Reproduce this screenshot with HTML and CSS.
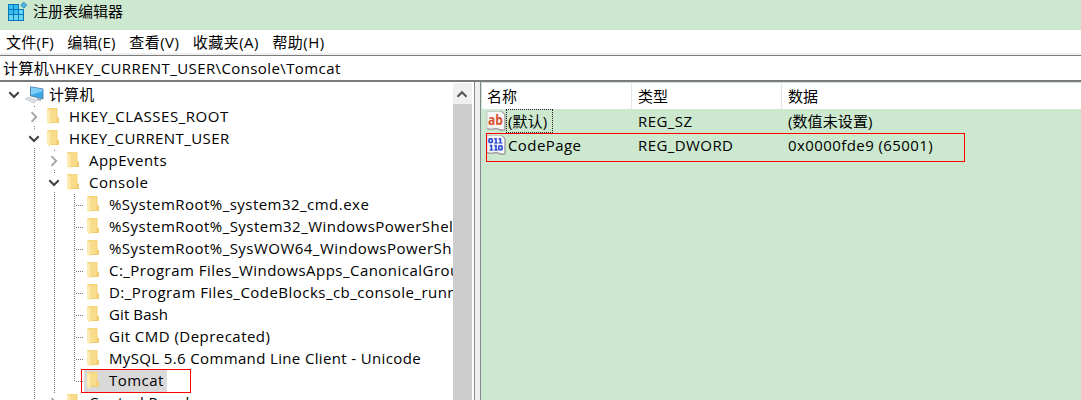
FILE: index.html
```html
<!DOCTYPE html>
<html lang="zh-CN">
<head>
<meta charset="utf-8">
<title>注册表编辑器</title>
<link rel="stylesheet" href="styles.css">
</head>
<body>
<svg class="defs" width="0" height="0">
  <symbol id="folder" viewBox="0 0 14 18">
    <path fill="#f5d67f" d="M1 0h10.500v9.500H13V15H4z"/>
    <path fill="#f9dc89" d="M5 1h5v13H5z"/>
    <path fill="#edc766" d="M11 10h2v5H5v-1h6z" opacity=".6"/>
    <path fill="#ffeab0" d="M1 .5l3.500 2V17L1 14.6z"/>
  </symbol>
  <symbol id="down" viewBox="0 0 12 8"><path d="M1.3 1.3L6 6l4.7-4.7" fill="none" stroke="#404040" stroke-width="2"/></symbol>
  <symbol id="right" viewBox="0 0 8 12"><path d="M1.5 1.2L6.2 6l-4.7 4.8" fill="none" stroke="#a6a6a6" stroke-width="1.9"/></symbol>
  <symbol id="sheet" viewBox="0 0 20 21">
    <path d="M1 .5H15.500l3.500 3v15.200c-2 .8-3 1-5 .1-2.600-1.200-3.500-1.500-6-.6-2 .7-5 .3-7-.8z" fill="#f7f7f7" stroke="#c9c9c9"/>
    <path d="M15.500 .5l3.500 3V18.800" fill="none" stroke="#8c8c8c"/>
    <path d="M1 17.300c2 1 4.500 1.300 6.500 .6 2.500-.9 3.500-.4 6 .8 2 .9 3.500 .7 5.500-.1" fill="none" stroke="#9c9c9c" stroke-width="1.400"/>
  </symbol>
</svg>
<main class="window">
  <header class="titlebar">
    <svg class="app-icon" viewBox="0 0 20 20" width="20" height="20">
      <path fill="#0878b9" d="M0 2h11v5h5v12H0z"/>
      <path fill="#35bdf0" d="M1 3h4v4H1zM6 3h4v4H6zM1 8h4v4H1zM6 8h4v4H6z"/>
      <path fill="#67d5fa" d="M11 8h4v4h-4zM1 13h4v5H1zM6 13h4v5H6zM11 13h4v5h-4z"/>
      <path fill="#4eb7e5" stroke="#1782bd" stroke-width=".8" d="M15.800.2l3 3-3 3-3-3z"/>
    </svg>
    <span class="title">注册表编辑器</span>
  </header>
  <nav class="menu">
    <span>文件(F)</span><span>编辑(E)</span><span class="m-view">查看(V)</span><span class="m-view">收藏夹(A)</span><span class="m-view">帮助(H)</span>
  </nav>
  <div class="address"><span class="path">计算机\HKEY_CURRENT_USER\Console\Tomcat</span></div>
  <div class="panes">
    <section class="left">
      <div class="tree">
        <div class="row"><i class="cell"><svg class="down"><use href="#down"/></svg></i>
          <svg class="pc" viewBox="0 0 20 18" width="20" height="18">
            <path d="M5.500 .8L18 3v10L5.500 9.800z" fill="#3fa9e8" stroke="#3c6e94" stroke-width=".8"/>
            <path d="M6 1.300l11.500 2v2L6 9z" fill="#7dcdf7"/>
            <path d="M12 12l4 1v2l-4-1z" fill="#a1adb5"/>
            <path d="M0 13l3-2 9 3-3 3z" fill="#dce1e5" stroke="#b9c1c7" stroke-width=".6"/>
          </svg><span class="t-pc">计算机</span></div>
        <div class="row"><i class="cell"></i><i class="cell gap"><svg class="right"><use href="#right"/></svg></i><svg class="folder"><use href="#folder"/></svg><span class="t-root">HKEY_CLASSES_ROOT</span></div>
        <div class="row"><i class="cell"></i><i class="cell gap"><svg class="down"><use href="#down"/></svg></i><svg class="folder"><use href="#folder"/></svg><span class="t-user">HKEY_CURRENT_USER</span></div>
        <div class="row"><i class="cell"></i><i class="cell line"></i><i class="cell gap"><svg class="right"><use href="#right"/></svg></i><svg class="folder"><use href="#folder"/></svg><span>AppEvents</span></div>
        <div class="row"><i class="cell"></i><i class="cell line"></i><i class="cell gap"><svg class="down"><use href="#down"/></svg></i><svg class="folder"><use href="#folder"/></svg><span>Console</span></div>
        <div class="row"><i class="cell"></i><i class="cell line"></i><i class="cell line"></i><i class="cell line branch"></i><svg class="folder"><use href="#folder"/></svg><span>%SystemRoot%_system32_cmd.exe</span></div>
        <div class="row"><i class="cell"></i><i class="cell line"></i><i class="cell line"></i><i class="cell line branch"></i><svg class="folder"><use href="#folder"/></svg><span>%SystemRoot%_System32_WindowsPowerShel</span></div>
        <div class="row"><i class="cell"></i><i class="cell line"></i><i class="cell line"></i><i class="cell line branch"></i><svg class="folder"><use href="#folder"/></svg><span>%SystemRoot%_SysWOW64_WindowsPowerSh</span></div>
        <div class="row"><i class="cell"></i><i class="cell line"></i><i class="cell line"></i><i class="cell line branch"></i><svg class="folder"><use href="#folder"/></svg><span>C:_Program Files_WindowsApps_CanonicalGrou</span></div>
        <div class="row"><i class="cell"></i><i class="cell line"></i><i class="cell line"></i><i class="cell line branch"></i><svg class="folder"><use href="#folder"/></svg><span>D:_Program Files_CodeBlocks_cb_console_runn</span></div>
        <div class="row"><i class="cell"></i><i class="cell line"></i><i class="cell line"></i><i class="cell line branch"></i><svg class="folder"><use href="#folder"/></svg><span class="t-bash">Git Bash</span></div>
        <div class="row"><i class="cell"></i><i class="cell line"></i><i class="cell line"></i><i class="cell line branch"></i><svg class="folder"><use href="#folder"/></svg><span>Git CMD (Deprecated)</span></div>
        <div class="row"><i class="cell"></i><i class="cell line"></i><i class="cell line"></i><i class="cell line branch"></i><svg class="folder"><use href="#folder"/></svg><span class="t-sql">MySQL 5.6 Command Line Client - Unicode</span></div>
        <div class="row selected"><i class="cell"></i><i class="cell line"></i><i class="cell line"></i><i class="cell line branch last"></i><svg class="folder"><use href="#folder"/></svg><span>Tomcat</span></div>
        <div class="row"><i class="cell"></i><i class="cell line"></i><i class="cell gap"><svg class="right"><use href="#right"/></svg></i><svg class="folder"><use href="#folder"/></svg><span>Control Panel</span></div>
      </div>
      <div class="scrollbar"><div class="up"><svg width="12" height="8" viewBox="0 0 12 8"><path d="M1.500 6.700L6 2.200l4.500 4.500" fill="none" stroke="#555" stroke-width="2.100"/></svg></div></div>
    </section>
    <div class="splitter"></div>
    <section class="right-pane">
      <div class="grid head"><span>名称</span><span>类型</span><span>数据</span></div>
      <div class="grid value">
        <span class="name"><svg class="sheet" viewBox="0 0 20 21"><use href="#sheet"/><text x="2" y="13.500" textLength="15" lengthAdjust="spacingAndGlyphs" class="ab">ab</text></svg><b class="focus">(默认)</b></span>
        <span>REG_SZ</span><span class="v-def">(数值未设置)</span>
      </div>
      <div class="grid value">
        <span class="name"><svg class="sheet" viewBox="0 0 20 21"><use href="#sheet"/>
          <g fill="none" stroke="#2e4fd3" stroke-width="1.700"><rect x="3" y="3.850" width="3.300" height="3.600" rx="1"/><path d="M8.300 3.800h1.700V8.300M12.700 3.800h1.700V8.300M3.700 10.600h1.700V15.500M8.300 10.600H10V15.500"/><rect x="12.800" y="10.850" width="3.300" height="3.800" rx="1"/></g><path d="M8 8h4M12.500 8h4M3.400 15h4M8 15h4" stroke="#2e4fd3"/></svg><b class="t-code">CodePage</b></span>
        <span>REG_DWORD</span><span>0x0000fde9 (65001)</span>
      </div>
    </section>
  </div>
  <div class="mark mark-tree"></div>
  <div class="mark mark-value"></div>
</main>
</body>
</html>
```
FILE: styles.css
```css
* { box-sizing: border-box; }
body { margin: 0; background: #fff; }
.window {
  position: relative; width: 1081px; height: 400px; overflow: hidden;
  display: flex; flex-direction: column;
  font: 15px/22px "Open Sans", "Noto Sans CJK SC", sans-serif; color: #000; white-space: nowrap;
}
.defs { position: absolute; }
.titlebar { height: 30px; flex: none; background: #cce8cf; display: flex; align-items: flex-start; padding: 0 0 0 8px; }
.app-icon { margin-top: 2px; }
.title { margin-left: 5px; }
.menu { height: 23px; flex: none; display: flex; gap: 13.5px; padding: 1px 0 0 6px; letter-spacing: .25px; }
.m-view { letter-spacing: .45px; }
.address { height: 29px; flex: none; border-top: 2px solid #f0f0f0; border-bottom: 2px solid #7c797d; }
.address .path { display: block; padding: 1px 0 0 3px; border-top: 1px solid #7a7a7a; letter-spacing: .4px; }
.panes { flex: 1; min-height: 0; display: flex; }
.left { width: 474px; display: flex; padding-right: 1px; }
.tree { width: 453px; padding: 2px 0 0 4px; overflow: hidden; }
.row { display: flex; height: 22px; letter-spacing: .47px; line-height: 20px; }
.cell { width: 20px; flex: none; display: flex; align-items: center; justify-content: center; }
.line, .gap { background: repeating-linear-gradient(#777 0 1px, transparent 1px 2px) 10px 0 / 1px 100% no-repeat; }
.gap svg { background: #fff; }
.branch { background: repeating-linear-gradient(#777 0 1px, transparent 1px 2px) 10px 0 / 1px 100% no-repeat, repeating-linear-gradient(90deg, #777 0 1px, transparent 1px 2px) 12px 11px / 8px 1px no-repeat; }
.branch.last { background-size: 1px 12px, 8px 1px; }
.down { width: 12px; height: 18px; margin-left: -1px; }
.right { width: 8px; height: 18px; }
.folder { width: 14px; height: 18px; margin: 2px 8px 0 2px; flex: none; }
.row > span { padding: 0 3px 0 1px; }
.row > .t-pc { padding-left: 4px; letter-spacing: .1px; }
.t-root { letter-spacing: .53px; }
.t-user { letter-spacing: .41px; }
.t-bash { letter-spacing: .1px; }
.t-sql { letter-spacing: .36px; }
.pc { margin: 2px 0 0 1px; flex: none; }
.selected .folder { margin: 0; padding: 2px 8px 2px 2px; width: 24px; height: 22px; background: #d9d9d9; }
.selected > span { background: #d9d9d9; }
.scrollbar { width: 19px; background: #cdcdcd; margin-top: 1px; }
.up { height: 21px; background: #f0f0f0; display: flex; align-items: center; justify-content: center; padding-right: 1px; }
.splitter { width: 7px; background: #f0f0f0; border: solid #828790; border-width: 0 1px; }
.right-pane { flex: 1; background: #cce8cf; padding-top: 1px; }
.grid { display: grid; grid-template-columns: 150px 150px 1fr; }
.head { height: 26px; margin-left: 1px; background: #fff; line-height: 26px; }
.head span { padding-left: 6px; border-right: 1px solid #e5e5e5; }
.head span:first-child { padding-left: 5px; }
.head span:last-child { border: 0; }
.value { height: 24px; padding-left: 1px; line-height: 25px; letter-spacing: .42px; }
.value > span + span { padding-left: 6px; }
.value > .v-def { letter-spacing: .1px; }
.name { display: flex; }
.name b { font-weight: 400; margin-left: 2px; }
.sheet { width: 20px; height: 21px; margin: 2px 0 0 4px; letter-spacing: 0; }
.ab { font: bold 14px "Open Sans", sans-serif; fill: #d9502e; }
.name .focus { height: 24px; padding: 0 5px 0 1px; border: 1px dotted #222; line-height: 23px; margin-left: 0; letter-spacing: .1px; }
.mark { position: absolute; border: 1px solid #f00; }
.mark-tree { left: 81px; top: 369px; width: 110px; height: 24px; }
.mark-value { left: 486px; top: 133px; width: 479px; height: 29px; }
```
